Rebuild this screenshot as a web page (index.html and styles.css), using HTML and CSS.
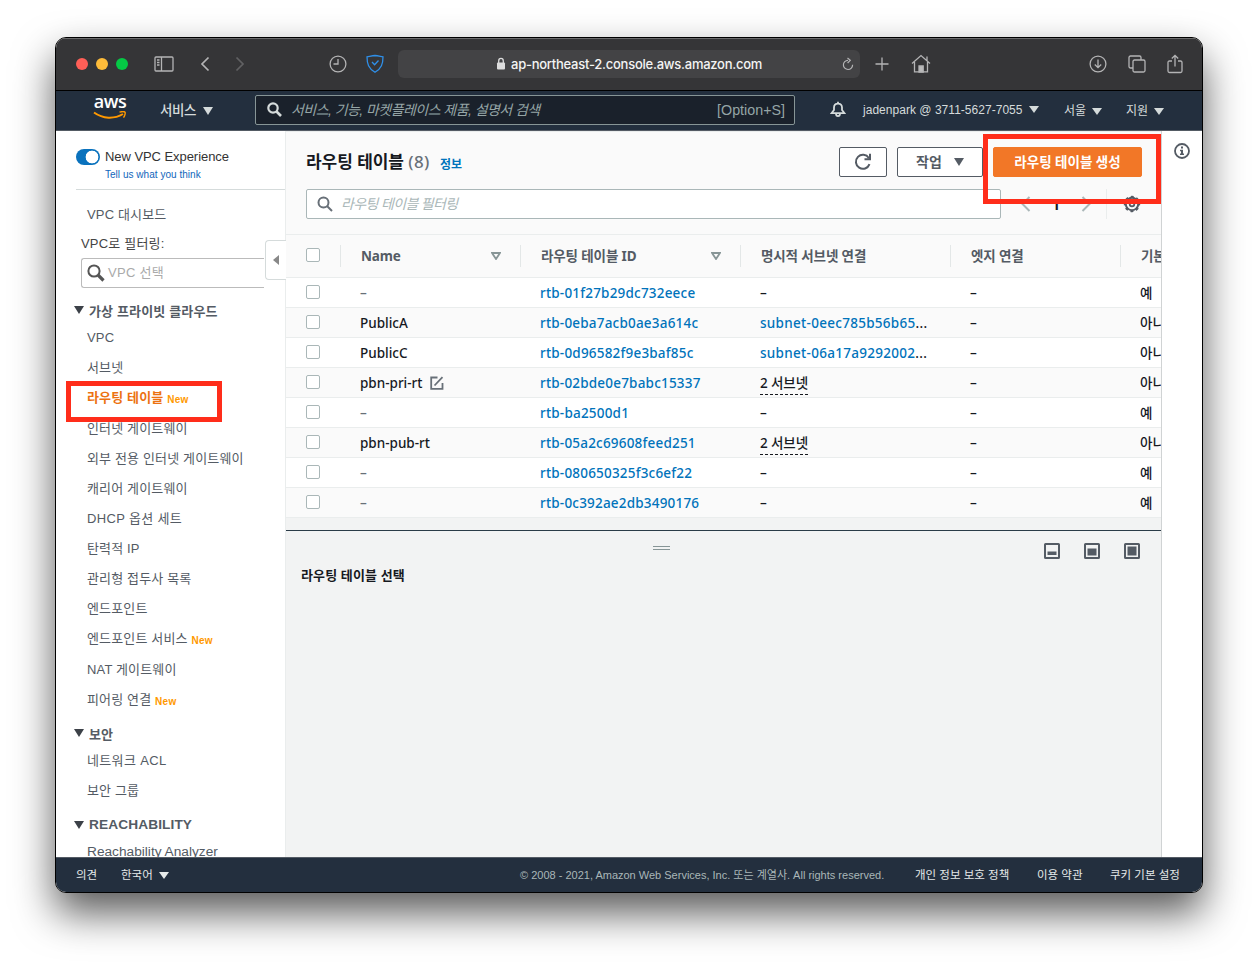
FILE: index.html
```html
<!DOCTYPE html>
<html lang="ko">
<head>
    <meta charset="UTF-8">
    <meta name="viewport" content="width=device-width, initial-scale=1.0">
    <title>라우팅 테이블</title>
    <link rel="stylesheet" href="styles.css">
</head>
<body>
    <div class="window">
        <!-- Safari toolbar -->
        <div class="toolbar">
            <span class="light red"></span>
            <span class="light yellow"></span>
            <span class="light green"></span>
            <svg class="tb-sidebar" width="20" height="16" viewBox="0 0 20 16"><rect x="1" y="1" width="18" height="14" rx="1" /><path d="M7.5 1v14M3 4h2.5M3 6.5h2.5M3 9h2.5" /></svg>
            <svg class="tb-back" width="10" height="16" viewBox="0 0 10 16"><path d="M8.500 1.500L2 8l6.500 6.500" stroke-width="1.700" /></svg>
            <svg class="tb-forward" width="10" height="16" viewBox="0 0 10 16"><path d="M1.500 1.500L8 8l-6.500 6.500" stroke-width="1.700" /></svg>
            <svg class="tb-clock" width="18" height="18" viewBox="0 0 18 18"><circle cx="9" cy="9" r="7.900" /><path d="M9 4v5H4.500" /></svg>
            <svg class="tb-shield" width="20" height="20" viewBox="0 0 20 20"><path d="M10 1.500c2.500.3 5 .8 8 1.300 0 7-1.500 11.500-8 15.500C3.500 14.300 2 9.800 2 2.800c3-.5 5.500-1 8-1.300zM7 8l2.600 2.800L13.500 6.500" /></svg>
            <div class="url">
                <svg width="10" height="13" viewBox="0 0 10 13"><rect x="1" y="5.500" width="8" height="7" rx="1" fill="#ddd" stroke="none" /><path d="M2.700 6V4a2.300 2.600 0 0 1 4.600 0v2" stroke="#ddd" /></svg>
                <span class="host">ap-northeast-2.console.aws.amazon.com</span>
                <svg class="reload" width="12" height="14" viewBox="0 0 12 14"><path d="M6 3.300a4.600 4.600 0 1 0 4.600 4.500M5.500 1l2.800 2.400L5.600 6" stroke-width="1.200" /></svg>
            </div>
            <svg class="tb-plus" width="14" height="14" viewBox="0 0 14 14"><path d="M7 .5v13M.5 7h13" /></svg>
            <svg class="tb-home" width="20" height="19" viewBox="0 0 20 19"><path d="M1 9.500L10 1.500l9 8M3.500 8v9.800h13V8M16 6.500v-4" /><path d="M8 18v-6h4.200v6z" fill="#bbb" /></svg>
            <svg class="tb-download" width="18" height="18" viewBox="0 0 18 18"><circle cx="9" cy="9" r="7.900" /><path d="M9 4.500v8M5.800 9.500L9 12.700l3.200-3.200" /></svg>
            <svg class="tb-tabs" width="18" height="18" viewBox="0 0 18 18"><rect x="5" y="5" width="12" height="12" rx="1.500" /><path d="M5 13H2.500A1.500 1.500 0 0 1 1 11.500v-9A1.500 1.500 0 0 1 2.500 1h9A1.500 1.500 0 0 1 13 2.500V5" /></svg>
            <svg class="tb-share" width="16" height="20" viewBox="0 0 16 20"><path d="M5 7H2.500Q1 7 1 8.500V17q0 1.500 1.500 1.500h11q1.500 0 1.500-1.500V8.500Q15 7 13.500 7H11M8 12.500V1.500M4.800 4.500L8 1.300l3.200 3.200" /></svg>
        </div>

        <!-- AWS header -->
        <div class="nav">
            <div class="logo">
                <span>aws</span>
                <svg width="34" height="9" viewBox="0 0 34 9"><path d="M1 1.500c9 6.500 20 6.800 29 1.500" fill="none" stroke="#ff9900" stroke-width="2" /><path d="M26.500 1.200c2.500-.8 5-.6 5.500 0s0 3.500-1.500 5.500" fill="none" stroke="#ff9900" stroke-width="1.400" /></svg>
            </div>
            <div class="services">서비스<i class="tri"></i></div>
            <div class="nav-search">
                <svg width="15" height="15" viewBox="0 0 15 15"><circle cx="6" cy="6" r="4.700" /><path d="M9.500 9.500l4.500 4.500" stroke-width="2.600" /></svg>
                <em>서비스, 기능, 마켓플레이스 제품, 설명서 검색</em>
                <span>[Option+S]</span>
            </div>
            <svg class="bell" width="16" height="17" viewBox="0 0 16 17"><path d="M1.500 12.200h13L12 9V6.500C12 3.800 10.500 2.600 8 2.600S4 3.800 4 6.500V9zM8 2.600V.8M6 12.500c0 3.500 4 3.500 4 0" /></svg>
            <div class="account">jadenpark @ 3711-5627-7055<i class="tri small"></i></div>
            <div class="region">서울<i class="tri small"></i></div>
            <div class="support">지원<i class="tri small"></i></div>
        </div>

        <div class="content">
            <div class="sidebar">
                <div class="experience">
                    <span class="toggle"></span>
                    <div>
                        <p class="exp-title">New VPC Experience</p>
                        <p class="exp-link">Tell us what you think</p>
                    </div>
                </div>
                <p class="dashboard">VPC 대시보드</p>
                <p class="filter-label">VPC로 필터링:</p>
                <div class="vpc-filter">
                    <svg width="18" height="18" viewBox="0 0 18 18"><circle cx="7" cy="7" r="5.600" fill="none" stroke="#555" stroke-width="2" /><path d="M11 11l5.500 5.500" stroke="#555" stroke-width="3.200" /></svg>
                    <span>VPC 선택</span>
                </div>
                <h3>가상 프라이빗 클라우드</h3>
                <ul>
                    <li>VPC</li>
                    <li>서브넷</li>
                    <li class="new active">라우팅 테이블 <b>New</b></li>
                    <li>인터넷 게이트웨이</li>
                    <li>외부 전용 인터넷 게이트웨이</li>
                    <li>캐리어 게이트웨이</li>
                    <li class="mixed">DHCP 옵션 세트</li>
                    <li>탄력적 IP</li>
                    <li>관리형 접두사 목록</li>
                    <li>엔드포인트</li>
                    <li class="new">엔드포인트 서비스 <b>New</b></li>
                    <li>NAT 게이트웨이</li>
                    <li class="new">피어링 연결 <b>New</b></li>
                </ul>
                <h3>보안</h3>
                <ul>
                    <li class="mixed">네트워크 ACL</li>
                    <li>보안 그룹</li>
                </ul>
                <h3 class="latin">REACHABILITY</h3>
                <ul>
                    <li class="latin">Reachability Analyzer</li>
                </ul>
                <div class="collapse"></div>
                <div class="mark mark-menu"></div>
            </div>

            <div class="main">
                <div class="head">
                    <div class="title-row">
                        <h1>라우팅 테이블 <span class="count">(8)</span></h1>
                        <a class="info">정보</a>
                        <button class="btn refresh"><svg width="20" height="20" viewBox="0 0 20 20"><path d="M16.500 12.200A7 7 0 1 1 15.800 6M17 1.800v5.400h-5.500" fill="none" stroke="#545b64" stroke-width="2" /></svg></button>
                        <button class="btn actions"><span>작업</span><i class="tri"></i></button>
                        <button class="btn primary">라우팅 테이블 생성</button>
                    </div>
                    <div class="filter-row">
                        <div class="table-filter">
                            <svg width="16" height="16" viewBox="0 0 16 16"><circle cx="6.500" cy="6.500" r="5" fill="none" stroke="#687078" stroke-width="2" /><path d="M10 10l5 5" stroke="#687078" stroke-width="2" /></svg>
                            <em>라우팅 테이블 필터링</em>
                        </div>
                        <svg class="prev" width="10" height="16" viewBox="0 0 10 16"><path d="M8.500 1L1.500 8l7 7" /></svg>
                        <span class="page">1</span>
                        <svg class="next" width="10" height="16" viewBox="0 0 10 16"><path d="M1.500 1l7 7-7 7" /></svg>
                        <div class="gear"><svg width="18" height="18" viewBox="0 0 18 18"><circle cx="9" cy="9" r="6.200" fill="none" stroke="#545b64" stroke-width="2" /><circle cx="9" cy="9" r="7.400" fill="none" stroke="#545b64" stroke-width="1.600" stroke-dasharray="3 2.810" stroke-dashoffset="1.500" /><circle cx="9" cy="9" r="2.300" fill="none" stroke="#545b64" stroke-width="1.800" /></svg></div>
                    </div>
                </div>

                <div class="row header">
                    <div><span class="check"></span></div>
                    <div>Name<svg class="sort" width="10" height="8" viewBox="0 0 10 8"><path d="M1 1h8L5 7z" /></svg></div>
                    <div>라우팅 테이블 ID<svg class="sort" width="10" height="8" viewBox="0 0 10 8"><path d="M1 1h8L5 7z" /></svg></div>
                    <div>명시적 서브넷 연결</div>
                    <div>엣지 연결</div>
                    <div>기본</div>
                </div>
                <div class="row"><div><span class="check"></span></div><div class="empty">–</div><div class="id">rtb-01f27b29dc732eece</div><div>–</div><div>–</div><div>예</div></div>
                <div class="row"><div><span class="check"></span></div><div>PublicA</div><div class="id">rtb-0eba7acb0ae3a614c</div><div class="subnet"><a>subnet-0eec785b56b65</a>...</div><div>–</div><div>아니요</div></div>
                <div class="row"><div><span class="check"></span></div><div>PublicC</div><div class="id">rtb-0d96582f9e3baf85c</div><div class="subnet"><a>subnet-06a17a9292002</a>...</div><div>–</div><div>아니요</div></div>
                <div class="row"><div><span class="check"></span></div><div>pbn-pri-rt<svg class="edit" width="14" height="14" viewBox="0 0 14 14"><path d="M7.500 1.500H1.200v11.300h11.300V7M4.500 9.500l8-8.300" fill="none" stroke="#687078" stroke-width="1.800" /></svg></div><div class="id">rtb-02bde0e7babc15337</div><div><span class="dashed">2 서브넷</span></div><div>–</div><div>아니요</div></div>
                <div class="row"><div><span class="check"></span></div><div class="empty">–</div><div class="id">rtb-ba2500d1</div><div>–</div><div>–</div><div>예</div></div>
                <div class="row"><div><span class="check"></span></div><div>pbn-pub-rt</div><div class="id">rtb-05a2c69608feed251</div><div><span class="dashed">2 서브넷</span></div><div>–</div><div>아니요</div></div>
                <div class="row"><div><span class="check"></span></div><div class="empty">–</div><div class="id">rtb-080650325f3c6ef22</div><div>–</div><div>–</div><div>예</div></div>
                <div class="row"><div><span class="check"></span></div><div class="empty">–</div><div class="id">rtb-0c392ae2db3490176</div><div>–</div><div>–</div><div>예</div></div>

                <!-- split panel -->
                <div class="panel">
                    <div class="panel-bar">
                        <span class="handle"></span>
                        <svg width="16" height="16" viewBox="0 0 16 16"><rect x="1" y="1" width="14" height="14" rx=".5" /><path d="M3.500 8.500h9v3.500h-9z" /></svg>
                        <svg width="16" height="16" viewBox="0 0 16 16"><rect x="1" y="1" width="14" height="14" rx=".5" /><path d="M3.500 5.500h9v7h-9z" /></svg>
                        <svg width="16" height="16" viewBox="0 0 16 16"><rect x="1" y="1" width="14" height="14" rx=".5" /><path d="M3.500 3.500h9v9h-9z" /></svg>
                    </div>
                    <h2>라우팅 테이블 선택</h2>
                </div>
            </div>

            <div class="help">
                <svg width="16" height="16" viewBox="0 0 16 16"><circle cx="8" cy="8" r="7" fill="none" stroke="#545b64" stroke-width="1.800" /><path d="M7 3.500h2v2H7zM6 6.800h3v3.700h1V12H6v-1.500h1V8.200H6z" fill="#545b64" /></svg>
            </div>
            <div class="mark mark-create"></div>
        </div>

        <div class="footer">
            <span class="feedback">의견</span>
            <span class="lang">한국어<i class="tri small"></i></span>
            <span class="copy">© 2008 - 2021, Amazon Web Services, Inc. 또는 계열사. All rights reserved.</span>
            <span class="privacy">개인 정보 보호 정책</span>
            <span class="terms">이용 약관</span>
            <span class="cookie">쿠키 기본 설정</span>
        </div>
    </div>
</body>
</html>
```
FILE: styles.css
```css
* {
    box-sizing: border-box;
}

body {
    margin: 0;
    padding: 37px 0 0 55px;
    height: 966px;
    overflow: hidden;
    background: #fff;
    font-family: "Liberation Sans", "Noto Sans CJK KR", sans-serif;
    font-size: 13px;
    white-space: nowrap;
}

h1, h2, h3, p, ul {
    margin: 0;
    padding: 0;
}

svg {
    flex: none;
    display: block;
}

.window {
    width: 1148px;
    height: 856px;
    border: 1px solid #000;
    border-radius: 11px;
    overflow: hidden;
    background: #fff;
    box-shadow: 0 20px 40px rgba(0, 0, 0, 0.65);
}

/* browser toolbar */
.toolbar {
    display: flex;
    align-items: center;
    height: 53px;
    padding: 0 0 2px 20px;
    background: #353537;
    border-top: 1px solid #6b6b6c;
    border-bottom: 1px solid #000;
}

.toolbar svg {
    fill: none;
    stroke: #b4b4b5;
    stroke-width: 1.3;
}

.light {
    width: 12px;
    height: 12px;
    margin-right: 8px;
    border-radius: 50%;
}

.red { background: #ff5f57; }
.yellow { background: #febc3a; }
.green { background: #05c945; }

.tb-sidebar { margin-left: 18px; }
.tb-back { margin-left: 26px; }
.tb-forward { margin-left: 25px; opacity: 0.35; }
.tb-clock { margin-left: 84px; }
.toolbar .tb-shield { margin-left: 18px; stroke: #2f8fe8; }
.tb-plus { margin-left: 15px; }
.tb-home { margin-left: 22px; }
.tb-download { margin-left: 158px; }
.tb-tabs { margin-left: 21px; }
.tb-share { margin-left: 21px; }

.url {
    display: flex;
    align-items: center;
    width: 462px;
    height: 28px;
    margin-left: 13px;
    padding-left: 98px;
    border-radius: 6px;
    background: #434345;
}

.host {
    width: 252px;
    margin: 0 79px 0 5px;
    color: #f4f4f4;
    font-family: Inter, sans-serif;
    font-size: 13px;
    font-weight: 500;
    letter-spacing: -0.25px;
}

/* aws header */
.nav {
    display: flex;
    align-items: center;
    height: 40px;
    padding-bottom: 2px;
    background: #232f3e;
    border-bottom: 1px solid #545b64;
    color: #d5dbdb;
}

.tri {
    display: inline-block;
    margin-left: 7px;
    border: 5px solid transparent;
    border-top: 8px solid currentColor;
    border-bottom: 0;
}

.tri.small {
    margin-left: 6px;
    border-top-width: 7px;
}

.logo {
    width: 34px;
    height: 26px;
    margin: 0 0 3px 37px;
    color: #fff;
    font: 600 18px/16px "Open Sans", sans-serif;
    letter-spacing: -0.5px;
    text-align: center;
}

.logo span {
    display: block;
    height: 14px;
    line-height: 12px;
}

.logo svg {
    margin-top: 2px;
}

.services {
    width: 95px;
    margin: 0 0 2px 33px;
    font-size: 13.5px;
    font-weight: 500;
    letter-spacing: -0.4px;
}

.nav-search {
    display: flex;
    align-items: center;
    width: 540px;
    height: 30px;
    padding: 0 9px 0 11px;
    border: 1px solid #879596;
    border-radius: 2px;
    background: #1a212b;
    color: #95a5a6;
    font-size: 14px;
}

.nav-search svg {
    margin-right: 9px;
    fill: none;
    stroke: #d5dbdb;
    stroke-width: 2.2;
}

.nav-search em {
    margin-bottom: 2px;
    letter-spacing: -0.55px;
}

.nav-search span {
    margin-left: auto;
    font-size: 14.3px;
}

.bell {
    margin-left: 35px;
    fill: none;
    stroke: #d5dbdb;
    stroke-width: 1.8;
}

.account, .region, .support {
    font-size: 12px;
}

.account {
    width: 201px;
    margin-left: 17px;
    letter-spacing: 0.03px;
}

.account .tri {
    vertical-align: 1px;
}

.region {
    width: 62px;
}

.region, .support {
    margin-bottom: 1px;
}

/* page body */
.content {
    display: flex;
    position: relative;
    height: 726px;
    overflow: hidden;
}

.sidebar {
    position: relative;
    flex: none;
    width: 230px;
    border-right: 1px solid #eaeded;
    color: #545b64;
}

.experience {
    display: flex;
    height: 44px;
    margin: 15px 0 10px 20px;
    padding-top: 3px;
    border-bottom: 1px solid #d5dbdb;
    color: #333;
}

.toggle {
    width: 24px;
    height: 16px;
    margin-right: 5px;
    border-radius: 8px;
    background: radial-gradient(circle at 16px 8px, #fff 6px, #0a72bd 6.7px);
}

.exp-title {
    font-size: 13px;
    line-height: 15px;
    letter-spacing: -0.06px;
}

.exp-link {
    margin-top: 4px;
    color: #1166bb;
    font-size: 10px;
    line-height: 14px;
    letter-spacing: 0.03px;
}

.dashboard {
    padding-left: 31px;
    line-height: 29px;
    letter-spacing: 0.15px;
}

.filter-label {
    padding-left: 25px;
    color: #444;
    line-height: 29px;
    letter-spacing: 0.2px;
}

.vpc-filter {
    display: flex;
    align-items: center;
    width: 183px;
    height: 30px;
    margin: 0 0 5px 25px;
    padding-left: 5px;
    border: 1px solid #bbb;
    border-right: 0;
    border-radius: 3px 0 0 3px;
    color: #aaa;
    letter-spacing: 0.3px;
}

.vpc-filter svg {
    margin-right: 3px;
}

.vpc-filter span {
    margin-bottom: 3px;
}

.sidebar h3 {
    display: flex;
    align-items: center;
    height: 30px;
    padding: 4px 0 0 18px;
    font-size: 13px;
    letter-spacing: 0.15px;
}

.sidebar h3::before {
    content: "";
    margin-right: 5px;
    border: 5px solid transparent;
    border-top: 8px solid #3c4148;
    border-bottom: 0;
}

.sidebar h3.latin {
    padding-top: 7px;
    font-size: 13.7px;
    letter-spacing: 0.1px;
}

.sidebar ul {
    padding-left: 31px;
    list-style: none;
}

.sidebar li {
    height: 30px;
    line-height: 30px;
    letter-spacing: 0.15px;
}

.sidebar li.mixed {
    letter-spacing: 0.35px;
}

.sidebar li.latin {
    line-height: 31px;
    font-size: 13.7px;
    letter-spacing: 0;
}

.sidebar .new {
    height: 31px;
}

.sidebar li b {
    position: relative;
    top: 1px;
    color: #ff9900;
    font-size: 10px;
    letter-spacing: 0.3px;
}

.sidebar .active {
    color: #ec7211;
    font-weight: bold;
}

.collapse {
    position: absolute;
    top: 109px;
    right: -1px;
    width: 21px;
    height: 40px;
    border: 1px solid #d5dbdb;
    border-right: 0;
    border-radius: 4px 0 0 4px;
    background: #fff;
}

.collapse::before {
    content: "";
    display: block;
    margin: 14px 0 0 7px;
    border: 5px solid transparent;
    border-right: 6px solid #888;
    border-left: 0;
    width: 0;
}

/* red highlight frames */
.mark {
    position: absolute;
    border: 5px solid #ff2d1a;
}

.mark-menu {
    left: 10px;
    top: 250px;
    width: 156px;
    height: 41px;
}

.mark-create {
    left: 927px;
    top: 3px;
    width: 178px;
    height: 70px;
}

.main {
    display: flex;
    flex-direction: column;
    flex: none;
    width: 876px;
    overflow: hidden;
    border-right: 1px solid #d0d3d4;
    background: #f2f3f3;
    color: #16191f;
    font-family: "Noto Sans", "Noto Sans CJK KR", sans-serif;
    font-size: 14px;
}

.head {
    flex: none;
    height: 104px;
    padding: 15px 0 0 20px;
    background: #fafafa;
    border-top: 1px solid #eaeded;
    border-bottom: 1px solid #eaeded;
}

.title-row {
    display: flex;
    align-items: center;
    height: 30px;
}

h1 {
    width: 134px;
    font-size: 17px;
    line-height: 30px;
    letter-spacing: -0.05px;
}

.count {
    color: #687078;
    font-weight: 500;
    letter-spacing: 0.4px;
}

a, .id {
    color: #0073bb;
}

.info {
    width: 399px;
    padding-top: 4px;
    font-size: 12px;
    font-weight: bold;
}

.btn {
    display: flex;
    align-items: center;
    justify-content: center;
    height: 30px;
    padding: 0;
    border: 1px solid #545b64;
    border-radius: 2px;
    background: #fff;
    color: #545b64;
    font-family: inherit;
    font-size: 14px;
    font-weight: bold;
}

.refresh {
    width: 48px;
}

.actions {
    width: 86px;
    margin: 0 10px;
}

.actions span {
    margin-bottom: 3px;
}

.actions .tri {
    margin-left: 12px;
    border-width: 8px 5px 0;
}

.primary {
    width: 149px;
    padding-bottom: 3px;
    border-color: #f27727;
    background: #f27727;
    color: #fff;
    font-size: 13.5px;
}

.filter-row {
    display: flex;
    align-items: center;
    margin-top: 12px;
}

.table-filter {
    display: flex;
    align-items: center;
    width: 695px;
    height: 30px;
    padding-left: 10px;
    border: 1px solid #aab7b8;
    border-radius: 2px;
    background: #fff;
    color: #aab7b8;
    letter-spacing: -0.6px;
}

.table-filter svg {
    margin-right: 8px;
}

.table-filter em {
    margin-bottom: 3px;
}

.prev, .next {
    fill: none;
    stroke: #aab7b8;
    stroke-width: 2;
}

.prev {
    margin-left: 20px;
}

.page {
    width: 50px;
    text-align: center;
    font-weight: bold;
}

.gear {
    margin-left: 15px;
    padding: 6px 0 6px 16px;
    border-left: 1px solid #eaeded;
}

/* table */
.row {
    display: grid;
    grid-template-columns: 54px 180px 220px 210px 170px 200px;
    flex: none;
    height: 30px;
    border-bottom: 1px solid #eaeded;
    background: #fff;
    font-size: 13.5px;
    font-weight: 500;
    line-height: 29px;
}

.row:nth-child(2n + 4) {
    background: #fafafa;
}

.row > div {
    display: flex;
    align-items: center;
    height: 29px;
    padding: 2px 0 0 20px;
}

.row > div:first-child {
    padding-top: 0;
}

.row > .id {
    letter-spacing: 0.2px;
}

.row > .subnet {
    letter-spacing: 0.29px;
}

.row.header {
    align-items: center;
    height: 43px;
    background: #fafafa;
    color: #545b64;
    font-weight: bold;
    line-height: 22px;
    letter-spacing: -0.12px;
}

.header > div {
    height: 22px;
    padding-top: 0;
    border-left: 1px solid #e3e7e7;
}

.header > div:first-child {
    border-left: 0;
}

.sort {
    margin: 0 19px 0 auto;
    fill: none;
    stroke: #879596;
    stroke-width: 1.8;
}

.check {
    width: 14px;
    height: 14px;
    margin-top: -2px;
    border: 1px solid #aab7b8;
    border-radius: 2px;
    background: #fff;
}

.empty {
    color: #687078;
}

.edit {
    margin: -2px 0 0 8px;
}

.dashed {
    height: 22px;
    border-bottom: 1px dashed #16191f;
    line-height: 20px;
    letter-spacing: -0.1px;
}

.panel {
    flex: 1;
    margin-top: 12px;
    border-top: 1px solid #2a3b47;
}

.panel-bar {
    display: flex;
    align-items: center;
    gap: 24px;
    height: 40px;
    padding-left: 367px;
}

.panel-bar svg {
    fill: none;
    stroke: #545b64;
    stroke-width: 2;
}

.panel-bar path {
    fill: #545b64;
    stroke: none;
}

.handle {
    width: 17px;
    height: 4px;
    margin: -6px 350px 0 0;
    border: 1px solid #879596;
    border-width: 1px 0;
}

h2 {
    padding-left: 15px;
    font-size: 13px;
    line-height: 8px;
    letter-spacing: 0.15px;
}

.help {
    padding: 12px;
}

.footer {
    display: flex;
    align-items: center;
    height: 36px;
    padding-bottom: 2px;
    border-top: 1px solid #545b64;
    border-bottom: 1px solid #545b64;
    background: #232f3e;
    color: #e6eaea;
    font-size: 11.5px;
}

.feedback {
    width: 45px;
    margin-left: 20px;
}

.lang {
    width: 399px;
}

.copy {
    width: 395px;
    color: #aab7b8;
    font-size: 11px;
}

.privacy {
    width: 122px;
}

.terms {
    width: 73px;
}
```
